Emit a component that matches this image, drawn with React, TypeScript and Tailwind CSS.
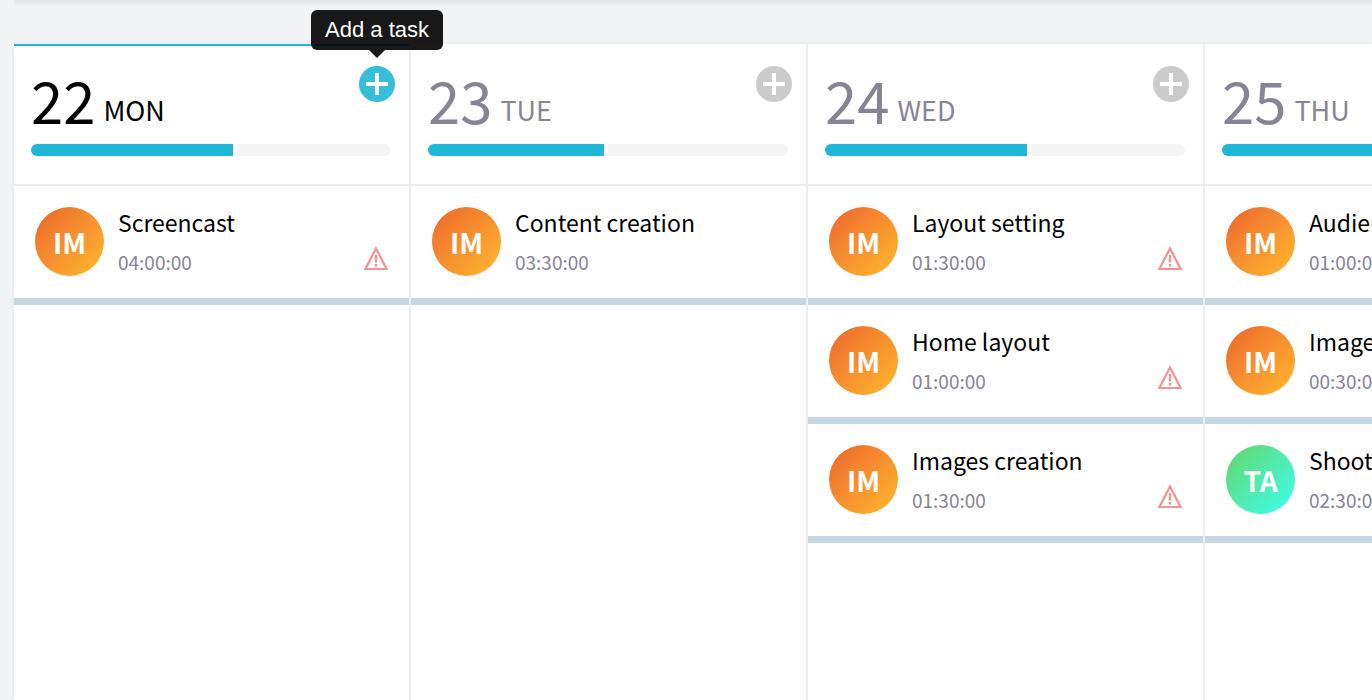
type Task = { title: string; time: string; user: "IM" | "TA"; late?: boolean };

type Day = { date: number; name: string; load: number; today?: boolean; tasks: Task[] };

const days: Day[] = [
  {
    date: 22,
    name: "MON",
    load: 56,
    today: true,
    tasks: [{ title: "Screencast", time: "04:00:00", user: "IM", late: true }],
  },
  {
    date: 23,
    name: "TUE",
    load: 49,
    tasks: [{ title: "Content creation", time: "03:30:00", user: "IM" }],
  },
  {
    date: 24,
    name: "WED",
    load: 56,
    tasks: [
      { title: "Layout setting", time: "01:30:00", user: "IM", late: true },
      { title: "Home layout", time: "01:00:00", user: "IM", late: true },
      { title: "Images creation", time: "01:30:00", user: "IM", late: true },
    ],
  },
  {
    date: 25,
    name: "THU",
    load: 56,
    tasks: [
      { title: "Audience", time: "01:00:00", user: "IM" },
      { title: "Images", time: "00:30:00", user: "IM" },
      { title: "Shooting", time: "02:30:00", user: "TA" },
    ],
  },
];

const avatarColors = {
  IM: "from-[#ec642d] to-[#feb92f]",
  TA: "from-[#63d561] to-[#37fef2]",
};

function PlusIcon() {
  return (
    <svg viewBox="0 0 36 36" className="size-9" fill="none" aria-hidden="true">
      <path d="M18 7 V29 M7 18 H29" stroke="currentColor" strokeWidth="4" />
    </svg>
  );
}

function WarningIcon() {
  return (
    <svg viewBox="0 0 26 25" className="h-[25px] w-[26px]" fill="none" role="img" aria-label="Late">
      <path d="M13 2.4 L23.6 23 H2.4 Z" stroke="#f09492" strokeWidth="2.2" />
      <path d="M13 9 V16.5 M13 18 V20.4" stroke="#f09492" strokeWidth="2.4" />
    </svg>
  );
}

function TaskRow({ task }: { task: Task }) {
  return (
    <li className="flex h-[119px] border-b-[7px] border-[#c5d8e1] pt-[21px] pr-5 pl-[21px]">
      <div
        className={`flex size-[69px] shrink-0 items-center justify-center rounded-full bg-linear-to-br text-[28px] font-bold text-white ${avatarColors[task.user]}`}
      >
        {task.user}
      </div>
      <div className="ml-[14px] flex-1">
        <p className="text-[23px] leading-[30px] whitespace-nowrap text-black">{task.title}</p>
        <p className="mt-[9px] text-[19px] leading-8 text-[#878494]">{task.time}</p>
      </div>
      {task.late && (
        <div className="pt-[39px]">
          <WarningIcon />
        </div>
      )}
    </li>
  );
}

function DayColumn({ day }: { day: Day }) {
  return (
    <section className="w-[397px] shrink-0 border-r-2 border-[#ededed] bg-white">
      <header
        className={`h-[142px] border-t-2 border-b-2 border-b-[#ededed] pr-[18px] pl-[17px] ${day.today ? "border-t-[#1fb6d7]" : "border-t-white"}`}
      >
        <div className="relative h-[98px] pt-[14px]">
          <h2 className={`flex items-end gap-2 ${day.today ? "text-black" : "text-[#878494]"}`}>
            <span className="text-[58px] leading-[78px]">{day.date}</span>
            <span className="text-[27px] leading-14">{day.name}</span>
          </h2>
          <button
            type="button"
            aria-label="Add a task"
            className={`absolute top-5 -right-1 rounded-full text-white ${day.today ? "bg-[#35bdda]" : "bg-[#cbcbcb]"}`}
          >
            <PlusIcon />
          </button>
          {day.today && (
            <div
              role="tooltip"
              className="absolute -top-9 -right-[52px] z-10 rounded-md bg-black/90 px-[14px] font-['Liberation_Sans',sans-serif] text-[22px] leading-10 whitespace-nowrap text-white"
            >
              Add a task
              <span className="absolute top-full left-1/2 -ml-2 border-x-8 border-t-8 border-x-transparent border-t-black/90" />
            </div>
          )}
        </div>
        <div className="flex h-3 gap-1 overflow-hidden rounded-full">
          <div className="bg-[#1fb6d7]" style={{ width: `${day.load}%` }} />
          <div className="flex-1 bg-[#f5f5f5]" />
        </div>
      </header>
      <ul>
        {day.tasks.map((task) => (
          <TaskRow key={task.title} task={task} />
        ))}
      </ul>
    </section>
  );
}

export default function App() {
  return (
    <div className="flex h-screen flex-col overflow-hidden bg-[#f3f4f6] pl-[14px] font-['Noto_Sans_CJK_SC','Noto_Sans',sans-serif]">
      <div className="h-11 shrink-0 bg-linear-to-b from-[#e3e4e6] to-[#f3f4f6] to-15%" />
      <main className="flex flex-1 shadow-[0_0_6px_rgba(0,0,0,0.07)]">
        {days.map((day) => (
          <DayColumn key={day.date} day={day} />
        ))}
      </main>
    </div>
  );
}
